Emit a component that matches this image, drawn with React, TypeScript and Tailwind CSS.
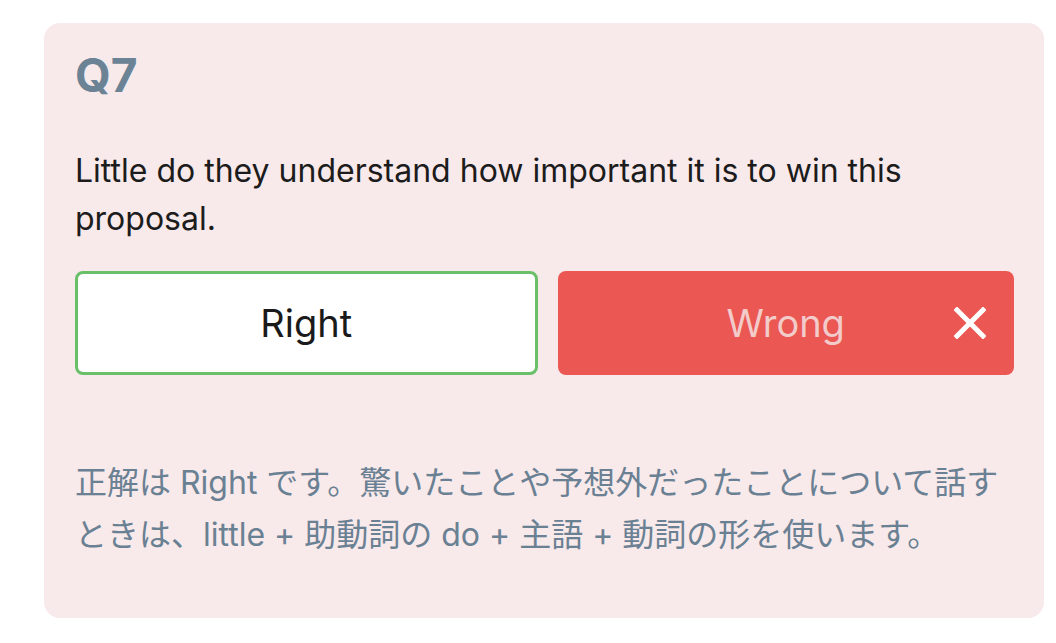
import React from "react";

export default function App() {
  return (
    <div className="w-[1056px] h-[643px] bg-white pt-[23px] pl-[44px]" style={{ fontFamily: 'Inter, "Noto Sans CJK JP", sans-serif' }}>
      <div className="w-[1000px] h-[595px] bg-[#f8e9ea] rounded-[16px] pl-[31px] pr-[30px] pt-[27px]">
        <div className="text-[46px] leading-[50px] font-bold text-[#6b8394]">Q7</div>
        <p className="mt-[47px] text-[32px] leading-[48px] text-[#1c1c1c]">
          Little do they understand how important it is to win this proposal.
        </p>
        <div className="mt-[28px] flex gap-[20px]">
          <div className="flex-1 h-[104px] rounded-[8px] border-[3px] border-[#6abf69] bg-white flex items-center justify-center text-[38px] text-[#1a1a1a]">
            Right
          </div>
          <div className="relative flex-1 h-[104px] rounded-[8px] bg-[#eb5752] flex items-center justify-center text-[38px] text-[#f2cbca]">
            Wrong
            <svg className="absolute left-[396px] top-[36px]" width="32" height="32" viewBox="0 0 32 32">
              <path d="M3 3 L29 29 M29 3 L3 29" stroke="#ffffff" strokeWidth="5" strokeLinecap="square" />
            </svg>
          </div>
        </div>
        <p className="mt-[82px] text-[32px] leading-[52px] text-[#6a8093]">
          正解は Right です。驚いたことや予想外だったことについて話すときは、little + 助動詞の do + 主語 + 動詞の形を使います。
        </p>
      </div>
    </div>
  );
}
